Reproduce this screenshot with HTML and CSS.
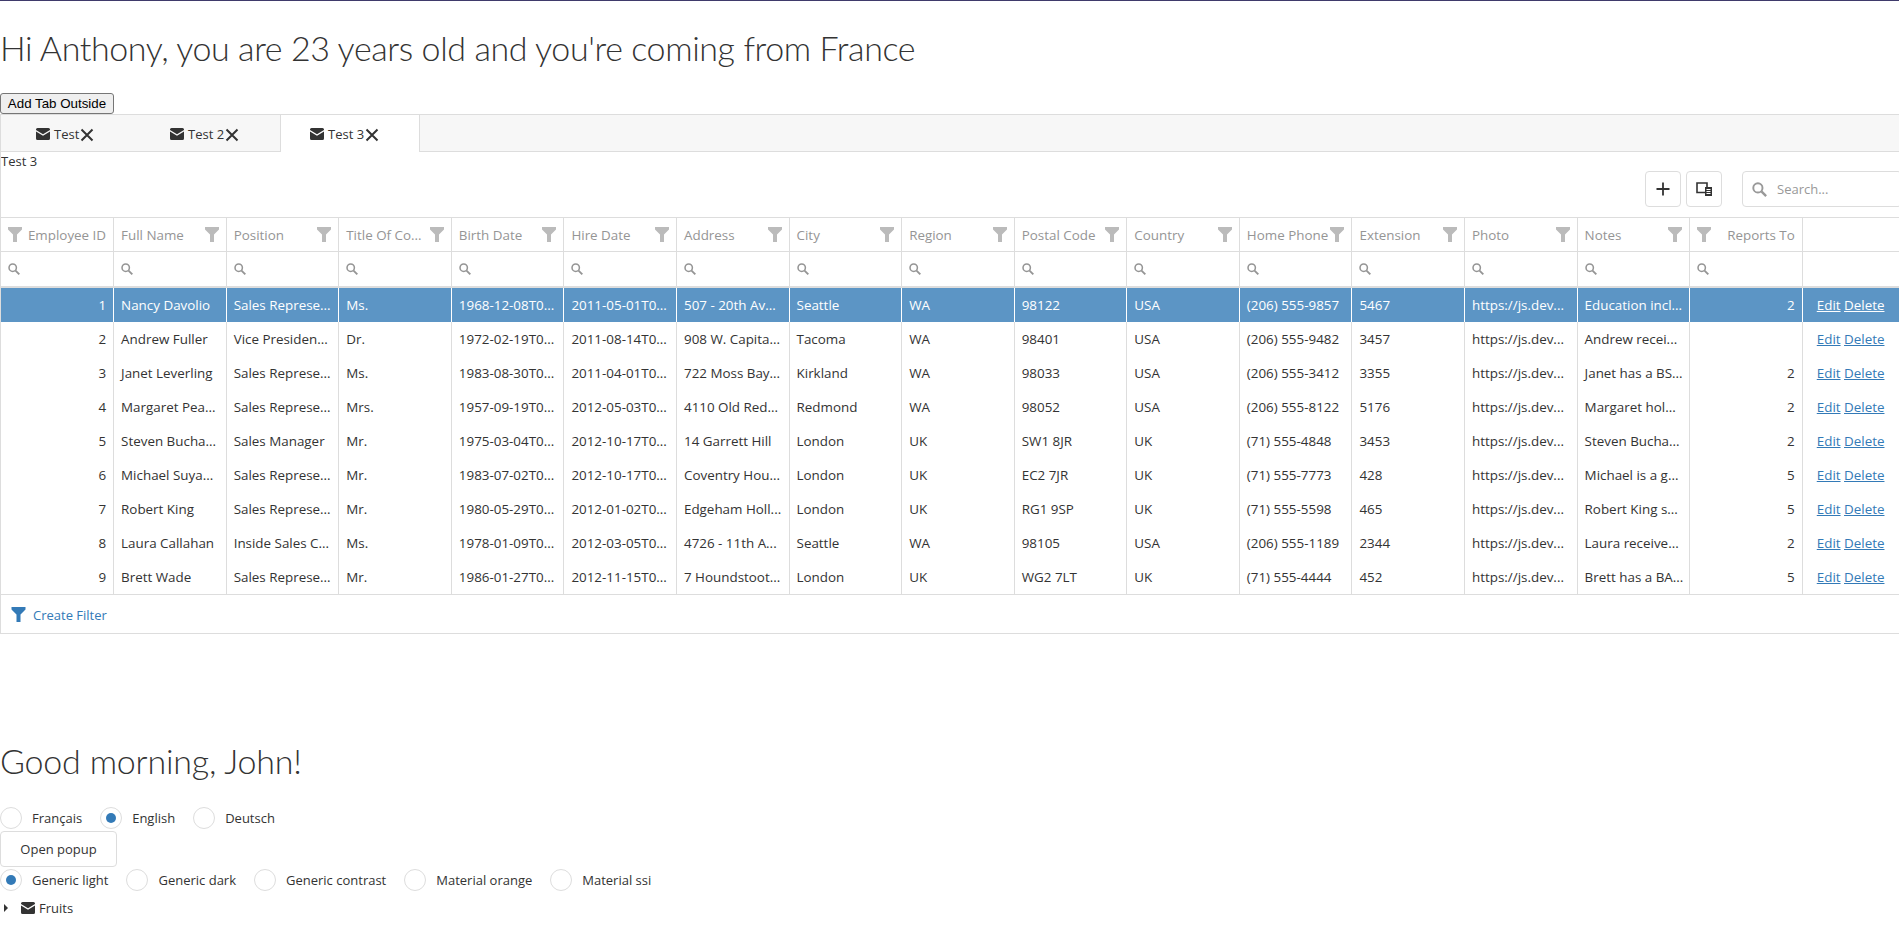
FILE: index.html
```html
<!DOCTYPE html>
<html lang="en">
  <head>
    <meta charset="UTF-8" />
    <title>Demo</title>
    <link rel="stylesheet" href="styles.css">
  </head>

  <body>
    <svg class="defs" width="0" height="0">
      <symbol id="i-mail" viewBox="0 0 14 12">
        <path d="M1.5 0h11A1.5 1.5 0 0 1 14 1.5V2L7 6.2 0 2v-.5A1.5 1.5 0 0 1 1.5 0zM0 3.6l7 4.2 7-4.2v6.9a1.5 1.5 0 0 1-1.5 1.5h-11A1.5 1.5 0 0 1 0 10.500z" fill="#333" />
      </symbol>
      <symbol id="i-close" viewBox="0 0 14 14">
        <path d="M1.500 1.500l11 11M12.500 1.500l-11 11" stroke="#333" stroke-width="2" fill="none" />
      </symbol>
      <symbol id="i-funnel" viewBox="0 0 14 15">
        <path d="M0 0h14v2.500L9 7.500V15H5V7.500L0 2.500z" />
      </symbol>
      <symbol id="i-search" viewBox="0 0 14 14">
        <circle cx="5.500" cy="5.500" r="4.300" stroke-width="1.800" fill="none" stroke="currentColor" />
        <path d="M8.800 8.800l4.400 4.400" stroke-width="2.200" stroke="currentColor" />
      </symbol>
    </svg>

    <h1 class="title">Hi Anthony, you are 23 years old and you're coming from France</h1>
    <button class="native_btn">Add Tab Outside</button>

    <div class="tabs">
      <div class="tab tab_first"><svg class="mail"><use href="#i-mail" /></svg><span>Test</span><svg class="close"><use href="#i-close" /></svg></div>
      <div class="tab"><svg class="mail"><use href="#i-mail" /></svg><span>Test 2</span><svg class="close"><use href="#i-close" /></svg></div>
      <div class="tab tab_active"><svg class="mail"><use href="#i-mail" /></svg><span>Test 3</span><svg class="close"><use href="#i-close" /></svg></div>
    </div>

    <div class="panel">
      <div class="panel_text">Test 3</div>
      <div class="grid_wrap">
        <div class="toolbar">
          <div class="tool_btn">
            <svg width="16" height="16" viewBox="0 0 16 16"><path d="M8 1.500v13M1.500 8h13" stroke="#333" stroke-width="1.800" /></svg>
          </div>
          <div class="tool_btn">
            <svg width="16" height="16" viewBox="0 0 16 16"><path d="M1 2h10v9.500H1z" stroke="#333" stroke-width="1.600" fill="none" /><path d="M9 6h7v9H9z" fill="#333" /><path d="M10.500 8.500h4M10.500 10.500h4M10.500 12.500h4" stroke="#fff" /></svg>
          </div>
          <div class="search_box">
            <svg class="search_icon"><use href="#i-search" /></svg>
            <span>Search...</span>
          </div>
        </div>

        <table class="grid">
          <thead>
            <tr class="head_row">
              <th class="num"><svg class="funnel left"><use href="#i-funnel" /></svg>Employee ID</th>
              <th><svg class="funnel"><use href="#i-funnel" /></svg>Full Name</th>
              <th><svg class="funnel"><use href="#i-funnel" /></svg>Position</th>
              <th><svg class="funnel"><use href="#i-funnel" /></svg>Title Of Co...</th>
              <th><svg class="funnel"><use href="#i-funnel" /></svg>Birth Date</th>
              <th><svg class="funnel"><use href="#i-funnel" /></svg>Hire Date</th>
              <th><svg class="funnel"><use href="#i-funnel" /></svg>Address</th>
              <th><svg class="funnel"><use href="#i-funnel" /></svg>City</th>
              <th><svg class="funnel"><use href="#i-funnel" /></svg>Region</th>
              <th><svg class="funnel"><use href="#i-funnel" /></svg>Postal Code</th>
              <th><svg class="funnel"><use href="#i-funnel" /></svg>Country</th>
              <th><svg class="funnel"><use href="#i-funnel" /></svg>Home Phone</th>
              <th><svg class="funnel"><use href="#i-funnel" /></svg>Extension</th>
              <th><svg class="funnel"><use href="#i-funnel" /></svg>Photo</th>
              <th><svg class="funnel"><use href="#i-funnel" /></svg>Notes</th>
              <th class="num"><svg class="funnel left"><use href="#i-funnel" /></svg>Reports To</th>
              <th></th>
            </tr>
            <tr class="filter_row">
              <td><svg class="lens"><use href="#i-search" /></svg></td>
              <td><svg class="lens"><use href="#i-search" /></svg></td>
              <td><svg class="lens"><use href="#i-search" /></svg></td>
              <td><svg class="lens"><use href="#i-search" /></svg></td>
              <td><svg class="lens"><use href="#i-search" /></svg></td>
              <td><svg class="lens"><use href="#i-search" /></svg></td>
              <td><svg class="lens"><use href="#i-search" /></svg></td>
              <td><svg class="lens"><use href="#i-search" /></svg></td>
              <td><svg class="lens"><use href="#i-search" /></svg></td>
              <td><svg class="lens"><use href="#i-search" /></svg></td>
              <td><svg class="lens"><use href="#i-search" /></svg></td>
              <td><svg class="lens"><use href="#i-search" /></svg></td>
              <td><svg class="lens"><use href="#i-search" /></svg></td>
              <td><svg class="lens"><use href="#i-search" /></svg></td>
              <td><svg class="lens"><use href="#i-search" /></svg></td>
              <td><svg class="lens"><use href="#i-search" /></svg></td>
              <td></td>
            </tr>
          </thead>
          <tbody>
            <tr class="selected">
              <td class="num">1</td><td>Nancy Davolio</td><td>Sales Represe...</td><td>Ms.</td><td>1968-12-08T0...</td><td>2011-05-01T0...</td><td>507 - 20th Av...</td><td>Seattle</td><td>WA</td><td>98122</td><td>USA</td><td>(206) 555-9857</td><td>5467</td><td>https://js.dev...</td><td>Education incl...</td><td class="num">2</td><td class="links"><a>Edit</a> <a>Delete</a></td>
            </tr>
            <tr>
              <td class="num">2</td><td>Andrew Fuller</td><td>Vice Presiden...</td><td>Dr.</td><td>1972-02-19T0...</td><td>2011-08-14T0...</td><td>908 W. Capita...</td><td>Tacoma</td><td>WA</td><td>98401</td><td>USA</td><td>(206) 555-9482</td><td>3457</td><td>https://js.dev...</td><td>Andrew recei...</td><td class="num"></td><td class="links"><a>Edit</a> <a>Delete</a></td>
            </tr>
            <tr>
              <td class="num">3</td><td>Janet Leverling</td><td>Sales Represe...</td><td>Ms.</td><td>1983-08-30T0...</td><td>2011-04-01T0...</td><td>722 Moss Bay...</td><td>Kirkland</td><td>WA</td><td>98033</td><td>USA</td><td>(206) 555-3412</td><td>3355</td><td>https://js.dev...</td><td>Janet has a BS...</td><td class="num">2</td><td class="links"><a>Edit</a> <a>Delete</a></td>
            </tr>
            <tr>
              <td class="num">4</td><td>Margaret Pea...</td><td>Sales Represe...</td><td>Mrs.</td><td>1957-09-19T0...</td><td>2012-05-03T0...</td><td>4110 Old Red...</td><td>Redmond</td><td>WA</td><td>98052</td><td>USA</td><td>(206) 555-8122</td><td>5176</td><td>https://js.dev...</td><td>Margaret hol...</td><td class="num">2</td><td class="links"><a>Edit</a> <a>Delete</a></td>
            </tr>
            <tr>
              <td class="num">5</td><td>Steven Bucha...</td><td>Sales Manager</td><td>Mr.</td><td>1975-03-04T0...</td><td>2012-10-17T0...</td><td>14 Garrett Hill</td><td>London</td><td>UK</td><td>SW1 8JR</td><td>UK</td><td>(71) 555-4848</td><td>3453</td><td>https://js.dev...</td><td>Steven Bucha...</td><td class="num">2</td><td class="links"><a>Edit</a> <a>Delete</a></td>
            </tr>
            <tr>
              <td class="num">6</td><td>Michael Suya...</td><td>Sales Represe...</td><td>Mr.</td><td>1983-07-02T0...</td><td>2012-10-17T0...</td><td>Coventry Hou...</td><td>London</td><td>UK</td><td>EC2 7JR</td><td>UK</td><td>(71) 555-7773</td><td>428</td><td>https://js.dev...</td><td>Michael is a g...</td><td class="num">5</td><td class="links"><a>Edit</a> <a>Delete</a></td>
            </tr>
            <tr>
              <td class="num">7</td><td>Robert King</td><td>Sales Represe...</td><td>Mr.</td><td>1980-05-29T0...</td><td>2012-01-02T0...</td><td>Edgeham Holl...</td><td>London</td><td>UK</td><td>RG1 9SP</td><td>UK</td><td>(71) 555-5598</td><td>465</td><td>https://js.dev...</td><td>Robert King s...</td><td class="num">5</td><td class="links"><a>Edit</a> <a>Delete</a></td>
            </tr>
            <tr>
              <td class="num">8</td><td>Laura Callahan</td><td>Inside Sales C...</td><td>Ms.</td><td>1978-01-09T0...</td><td>2012-03-05T0...</td><td>4726 - 11th A...</td><td>Seattle</td><td>WA</td><td>98105</td><td>USA</td><td>(206) 555-1189</td><td>2344</td><td>https://js.dev...</td><td>Laura receive...</td><td class="num">2</td><td class="links"><a>Edit</a> <a>Delete</a></td>
            </tr>
            <tr>
              <td class="num">9</td><td>Brett Wade</td><td>Sales Represe...</td><td>Mr.</td><td>1986-01-27T0...</td><td>2012-11-15T0...</td><td>7 Houndstoot...</td><td>London</td><td>UK</td><td>WG2 7LT</td><td>UK</td><td>(71) 555-4444</td><td>452</td><td>https://js.dev...</td><td>Brett has a BA...</td><td class="num">5</td><td class="links"><a>Edit</a> <a>Delete</a></td>
            </tr>
          </tbody>
        </table>

        <div class="filter_panel">
          <svg class="funnel_blue"><use href="#i-funnel" /></svg>
          <a>Create Filter</a>
        </div>
      </div>
    </div>

    <h1 class="title title_second">Good morning, John!</h1>

    <div class="radios radios_first">
      <label class="radio"><span class="dot"></span>Français</label>
      <label class="radio"><span class="dot dot_on"></span>English</label>
      <label class="radio"><span class="dot"></span>Deutsch</label>
    </div>
    <div class="popup_btn">Open popup</div>
    <div class="radios">
      <label class="radio"><span class="dot dot_on"></span>Generic light</label>
      <label class="radio"><span class="dot"></span>Generic dark</label>
      <label class="radio"><span class="dot"></span>Generic contrast</label>
      <label class="radio"><span class="dot"></span>Material orange</label>
      <label class="radio"><span class="dot"></span>Material ssi</label>
    </div>
    <div class="tree_item">
      <span class="arrow"></span>
      <svg class="mail"><use href="#i-mail" /></svg>
      <span>Fruits</span>
    </div>
  </body>
</html>
```

FILE: styles.css
```css
* {
  box-sizing: border-box;
}
html,
body {
  overflow-x: hidden;
}
body {
  margin: 0;
  border-top: 1px solid #3f3a6b;
  font-family: "Open Sans", "Noto Sans", sans-serif;
  font-size: 13px;
  color: #333;
  background: #fff;
}
.defs {
  position: absolute;
}
.title {
  margin: 0;
  padding-top: 24px;
  height: 92px;
  font-family: Lato, "Open Sans", sans-serif;
  font-size: 34px;
  letter-spacing: -0.4px;
  line-height: 45px;
  font-weight: 300;
  color: #333;
}
.title_second {
  height: 68px;
  margin-top: 104px;
  padding-top: 0;
  letter-spacing: -0.2px;
}
.native_btn {
  display: block;
  height: 21px;
  width: 114px;
  padding: 1px 6px;
  font-family: "Liberation Sans", sans-serif;
  font-size: 13.33px;
  color: #000;
  background: #efefef;
  border: 1px solid #767676;
  border-radius: 3px;
}

/* tabs */
.tabs {
  display: flex;
  height: 38px;
  background: #f7f7f7;
  border: 1px solid #ddd;
  border-right: 0;
  border-width: 1px 0 1px 1px;
}
.tab {
  display: flex;
  align-items: center;
  width: 139px;
  padding-left: 29px;
  height: 37px;
}
.tab_first {
  width: 140px;
  padding-left: 35px;
}
.tab_active {
  width: 140px;
  height: 37px;
  background: #fff;
  border-right: 1px solid #ddd;
  border-left: 1px solid #ddd;
  margin-bottom: -1px;
}
.mail {
  width: 14px;
  height: 12px;
  margin-right: 4px;
}
.close {
  width: 14px;
  height: 14px;
  margin-left: 1px;
  margin-top: 2px;
}
.panel {
  border: 1px solid #ddd;
  border-top: 0;
  border-right: 0;
  overflow: hidden;
  height: 482px;
}
.panel_text {
  height: 19px;
  line-height: 19px;
}

/* grid */
.grid_wrap {
  width: 1914px;
}
.toolbar {
  display: flex;
  justify-content: flex-end;
  height: 46px;
}
.tool_btn {
  display: flex;
  align-items: center;
  justify-content: center;
  width: 36px;
  height: 36px;
  margin-left: 5px;
  border: 1px solid #ddd;
  border-radius: 4px;
}
.search_box {
  display: flex;
  align-items: center;
  width: 160px;
  height: 36px;
  margin-left: 20px;
  margin-right: 13px;
  padding-left: 9px;
  border: 1px solid #ddd;
  border-radius: 4px;
  color: #999;
}
.search_icon {
  width: 15px;
  height: 15px;
  margin-right: 10px;
  color: #999;
}
.grid {
  width: 1914px;
  table-layout: fixed;
  border-collapse: collapse;
  font-size: 13.4px;
}
.grid th,
.grid td {
  padding: 0 7px;
  border-left: 1px solid #ddd;
  white-space: nowrap;
  overflow: hidden;
  text-align: left;
  font-weight: 400;
}
.grid th:first-child,
.grid td:first-child {
  border-left: 0;
}
.head_row {
  height: 34px;
  border-top: 1px solid #ddd;
  border-bottom: 1px solid #ddd;
  color: #959595;
}
.head_row th {
  color: #959595;
}
.filter_row {
  height: 35px;
  border-bottom: 2px solid #ddd;
}
.grid tbody tr {
  height: 34px;
}
.grid tbody tr.selected,
.grid tbody tr:last-child {
  height: 35px;
}
.grid tbody tr:last-child {
  border-bottom: 1px solid #ddd;
}
.grid .num {
  text-align: right;
}
.funnel {
  float: right;
  width: 14px;
  height: 15px;
  margin-top: 1px;
  fill: #bbb;
}
.funnel.left {
  float: left;
}
.lens {
  display: block;
  width: 12px;
  height: 12px;
  color: #959595;
}
.selected {
  background: #5c95c5;
  color: #fff;
}
.grid .selected td {
  border-left-color: #fff;
}
.grid .links {
  padding-left: 14px;
}
.links a {
  color: #337ab7;
  text-decoration: underline;
}
.selected .links a {
  color: #fff;
}
.filter_panel {
  display: flex;
  align-items: center;
  height: 39px;
  padding-left: 10px;
  color: #337ab7;
}
.funnel_blue {
  width: 15px;
  height: 15px;
  margin-right: 7px;
  fill: #337ab7;
}

/* bottom form */
.radios {
  display: flex;
  height: 24px;
  align-items: center;
}
.radios_first {
  margin-bottom: 1px;
}
.radio {
  display: flex;
  align-items: center;
  margin-right: 18px;
}
.dot {
  position: relative;
  width: 22px;
  height: 22px;
  margin-right: 10px;
  border: 1px solid #ddd;
  border-radius: 50%;
}
.dot_on::after {
  content: "";
  position: absolute;
  left: 5px;
  top: 5px;
  width: 10px;
  height: 10px;
  border-radius: 50%;
  background: #337ab7;
}
.popup_btn {
  width: 117px;
  height: 36px;
  line-height: 34px;
  margin-bottom: 1px;
  text-align: center;
  border: 1px solid #ddd;
  border-radius: 4px;
}
.tree_item {
  display: flex;
  align-items: center;
  height: 32px;
  padding-left: 4px;
}
.arrow {
  width: 0;
  height: 0;
  margin-right: 13px;
  border-left: 4px solid #333;
  border-top: 4px solid transparent;
  border-bottom: 4px solid transparent;
}
```
